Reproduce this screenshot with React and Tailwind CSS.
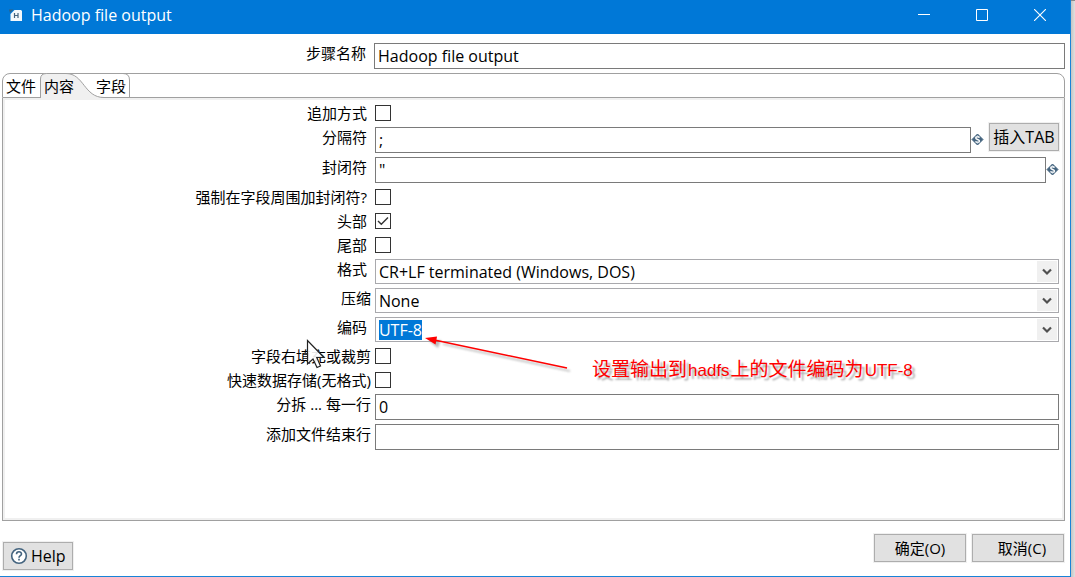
import { useEffect, useRef, useState } from "react"

const TABS = ["文件", "内容", "字段"]

const LINE_FORMATS = [
  "CR+LF terminated (Windows, DOS)",
  "LF terminated (Unix)",
  "CR terminated",
]
const COMPRESSIONS = ["None", "Zip", "GZip", "Snappy"]

const inputClass =
  "h-[26px] w-full min-w-0 flex-1 border border-[#7a7a7a] bg-white px-[3px] text-base text-black outline-none"
const buttonClass =
  "flex h-7 items-center border border-[#adadad] bg-[#e1e1e1] outline outline-[#f0f0f0] hover:bg-[#e5f1fb]"

function Row({ label, id, flush, small, children }) {
  return (
    <div className={small ? "flex h-5" : "flex"}>
      <label
        htmlFor={id}
        className={`w-[35%] shrink-0 text-right leading-5 whitespace-nowrap ${
          flush ? "pr-1" : "pr-2"
        }`}
      >
        {label}
      </label>
      <div className="flex min-w-0 flex-1 items-start pr-[3px]">{children}</div>
    </div>
  )
}

function CheckRow({ label, id, flush, defaultChecked }) {
  return (
    <Row label={label} id={id} flush={flush} small>
      <span className="relative mt-[2px] h-4 w-4">
        <input
          id={id}
          type="checkbox"
          defaultChecked={defaultChecked}
          className="peer block h-4 w-4 appearance-none border border-[#333] bg-white"
        />
        <svg
          viewBox="0 0 16 16"
          className="pointer-events-none absolute inset-0 hidden h-4 w-4 peer-checked:block"
        >
          <path d="M3 8l3.3 3.3L13 4.5" fill="none" stroke="#333" strokeWidth="1.4" />
        </svg>
      </span>
    </Row>
  )
}

function Chevron() {
  return (
    <svg viewBox="0 0 10 8" className="h-2 w-[10px]">
      <path d="M1 1.5l4 4 4-4" fill="none" stroke="#505050" strokeWidth="2.2" />
    </svg>
  )
}

function SelectRow({ label, id, flush, options }) {
  return (
    <Row label={label} id={id} flush={flush}>
      <div className="relative h-[25px] flex-1">
        <select
          id={id}
          className="h-full w-full appearance-none border border-[#a9a9ad] bg-white px-[3px] text-base leading-5 text-black outline-none"
        >
          {options.map((option) => (
            <option key={option}>{option}</option>
          ))}
        </select>
        <span className="pointer-events-none absolute top-[2px] right-[2px] bottom-[2px] flex w-5 items-center justify-center bg-[#f0f0f0]">
          <Chevron />
        </span>
      </div>
    </Row>
  )
}

// Marks a field that accepts ${variables}
function VariableIcon() {
  return (
    <svg viewBox="0 0 13 13" className="mt-[6px] h-[13px] w-[13px] shrink-0">
      <path
        d="M6.500 1l5.500 5.500-5.500 5.500L1 6.500z"
        fill="#44647f"
        stroke="#44647f"
        strokeLinejoin="round"
      />
      <path
        d="M8.500 4.700C7.800 3.500 4.700 3.400 4.700 5.100c0 1.700 3.800 1.100 3.800 2.900 0 1.700-3.200 1.600-4 .3"
        fill="none"
        stroke="#fff"
        strokeWidth="1.400"
      />
      <path d="M6.500 2.500v1.500M6.500 9v1.500" stroke="#dfe8ee" strokeWidth="1" />
    </svg>
  )
}

function TitleBar() {
  return (
    <header className="flex h-[34px] items-center bg-[#0078d7] pr-px pl-[9px] text-white">
      <svg viewBox="0 0 14 14" className="mb-1 h-[14px] w-[14px] shrink-0">
        <path d="M5.500 2H12l1 1v10H1.500V6z" fill="#f4f8fb" />
        <path d="M0 1.500h4.500L1 5z" fill="#2d6287" />
        <path d="M5.500 5v5M9 5v5M5.500 7.500H9" stroke="#44647f" strokeWidth="1.2" fill="none" />
      </svg>
      <h1 className="ml-2 flex-1 pb-1 text-base leading-5">Hadoop file output</h1>
      <button aria-label="Minimize" className="flex w-[58px] justify-center pb-1">
        <svg viewBox="0 0 12 12" className="h-3 w-3">
          <path d="M0 5.5h12" stroke="#fff" />
        </svg>
      </button>
      <button aria-label="Maximize" className="flex w-[58px] justify-center pb-1">
        <svg viewBox="0 0 12 12" className="h-3 w-3">
          <path d="M.5.5h11v11H.5z" fill="none" stroke="#fff" />
        </svg>
      </button>
      <button aria-label="Close" className="flex w-[58px] justify-center pb-1">
        <svg viewBox="0 0 12 12" className="h-3 w-3">
          <path d="M0 0l12 12M12 0L0 12" stroke="#fff" strokeWidth="1.1" />
        </svg>
      </button>
    </header>
  )
}

function TabStrip({ active, setActive }) {
  return (
    <div
      role="tablist"
      className="relative flex h-[25px] rounded-t-lg border border-[#a0a0a0] bg-white pl-[3px]"
    >
      <svg
        viewBox="0 0 130 25"
        className="pointer-events-none absolute -top-px -left-px h-[25px] w-[130px]"
      >
        <path
          d="M38.5 25V6q0-5.500 6-5.500H64C82 .5 82 24.500 102 24.500V25z"
          fill="#f0f0f0"
        />
        <path
          d="M38.500 25V6q0-5.500 6-5.500H64C82 .5 82 24.500 102 24.500M121 .5q6.500 0 6.500 6.500V24.500"
          fill="none"
          stroke="#a0a0a0"
        />
      </svg>
      {TABS.map((tab, i) => (
        <button
          key={tab}
          role="tab"
          aria-selected={active === i}
          onClick={() => setActive(i)}
          className={`relative h-6 leading-6 ${i === 2 ? "ml-[14px] px-1" : i === 1 ? "px-1" : "pr-1"}`}
        >
          {tab}
        </button>
      ))}
    </div>
  )
}

function Annotation() {
  return (
    <>
      <svg
        viewBox="0 0 150 46"
        className="pointer-events-none absolute top-[332px] left-[422px] h-[46px] w-[150px]"
      >
        <g className="blur-[1px]" opacity="0.4" transform="translate(3 3)">
          <path d="M18 9L145 36" stroke="#555" strokeWidth="1.6" />
          <path d="M4 6l12-1-3 8z" fill="#555" />
        </g>
        <path d="M10 7.500L145 36" stroke="#f00" strokeWidth="1.6" />
        <path d="M3 6l12-1.500-1.500 8z" fill="#f00" />
      </svg>
      <p className="pointer-events-none absolute top-[358px] left-[592px] font-['Liberation_Sans','Noto_Sans_CJK_SC',sans-serif] text-[19px] leading-6 whitespace-nowrap text-[#f00] [text-shadow:3px_3px_2px_#0005]">
        设置输出到<span className="mx-px text-[17px]">hadfs</span>上的文件编码为
        <span className="mx-px text-[17px]">UTF-8</span>
      </p>
      <svg
        viewBox="0 0 20 30"
        className="pointer-events-none absolute top-[339px] left-[306px] h-[30px] w-5"
      >
        <path
          d="M1.500 1.500V25l5.500-5 4 8.500 3.500-1.500-3.700-8.500h7.200z"
          fill="#fff"
          fillOpacity="0.9"
          stroke="#222"
          strokeWidth="1.2"
        />
      </svg>
    </>
  )
}

export default function App() {
  const [active, setActive] = useState(1)
  const encodingRef = useRef(null)

  // The encoding box opens focused with its value selected
  useEffect(() => {
    encodingRef.current?.focus()
    encodingRef.current?.select()
  }, [])

  return (
    <div className="flex min-h-screen bg-[#d6d6d6] font-['Open_Sans','Noto_Sans_CJK_SC',sans-serif] text-[15px] text-black">
      <div className="relative flex min-w-0 flex-1 flex-col border-r border-b border-[#1883d7] bg-white">
        <TitleBar />
        <main className="flex flex-1 flex-col pt-[9px] pr-[5px] pl-[2px]">
          <div className="mb-1 flex">
            <label htmlFor="step" className="w-[35%] shrink-0 pr-2 text-right leading-5">
              步骤名称
            </label>
            <input id="step" defaultValue="Hadoop file output" className={inputClass} />
          </div>

          <TabStrip active={active} setActive={setActive} />
          <section className="flex-1 border border-t-0 border-[#a0a0a0]">
            <div className="flex h-full flex-col gap-1 border-2 border-[#f0f0f0] pt-[3px]">
              <CheckRow label="追加方式" id="append" />
              <Row label="分隔符" id="separator">
                <input id="separator" defaultValue=";" className={inputClass} />
                <VariableIcon />
                <button
                  className={`${buttonClass} -my-1 ml-[5px] w-[70px] shrink-0 justify-center text-base whitespace-nowrap`}
                >
                  插入TAB
                </button>
              </Row>
              <Row label="封闭符" id="enclosure">
                <input id="enclosure" defaultValue={'"'} className={inputClass} />
                <VariableIcon />
              </Row>
              <CheckRow label="强制在字段周围加封闭符?" id="force" />
              <CheckRow label="头部" id="header" defaultChecked />
              <CheckRow label="尾部" id="footer" />
              <SelectRow label="格式" id="format" options={LINE_FORMATS} />
              <SelectRow label="压缩" id="compression" options={COMPRESSIONS} flush />
              <Row label="编码" id="encoding">
                <div className="flex h-[25px] flex-1 border border-[#a9a9ad] p-px">
                  <input
                    id="encoding"
                    ref={encodingRef}
                    defaultValue="UTF-8"
                    className="min-w-0 flex-1 bg-white px-[2px] text-base leading-5 outline-none selection:bg-[#0078d7] selection:text-white"
                  />
                  <button
                    aria-label="编码"
                    className="flex w-5 items-center justify-center bg-[#f0f0f0]"
                  >
                    <Chevron />
                  </button>
                </div>
              </Row>
              <CheckRow label="字段右填充或裁剪" id="pad" flush />
              <CheckRow label="快速数据存储(无格式)" id="fast" flush />
              <Row label="分拆 ... 每一行" id="split" flush>
                <input id="split" defaultValue="0" className={inputClass} />
              </Row>
              <Row label="添加文件结束行" id="ending" flush>
                <input id="ending" className={inputClass} />
              </Row>
            </div>
          </section>

          <footer className="flex items-end justify-between pt-[13px] pr-px pb-[6px] pl-px">
            <button className={`${buttonClass} gap-[3px] px-[6px] text-base`}>
              <svg viewBox="0 0 18 18" className="h-[18px] w-[18px]">
                <circle cx="9" cy="9" r="7.300" fill="#fff" stroke="#44647f" strokeWidth="1.600" />
                <path
                  d="M6.500 7.200C6.500 4 11.500 4 11.500 7c0 1.700-2.500 1.700-2.500 3.700M9 11.800v1.700"
                  fill="none"
                  stroke="#44647f"
                  strokeWidth="1.600"
                />
              </svg>
              Help
            </button>
            <div className="mb-2 flex gap-[6px]">
              <button className={`${buttonClass} w-[92px] justify-center`}>确定(O)</button>
              <button className={`${buttonClass} w-[92px] justify-center pl-2`}>取消(C)</button>
            </div>
          </footer>
        </main>
        <Annotation />
      </div>
      <div className="w-1 shrink-0 border-t border-[#8a8a8a] bg-linear-to-r from-[#c4c4c4] to-[#e0e0e0]" />
    </div>
  )
}
